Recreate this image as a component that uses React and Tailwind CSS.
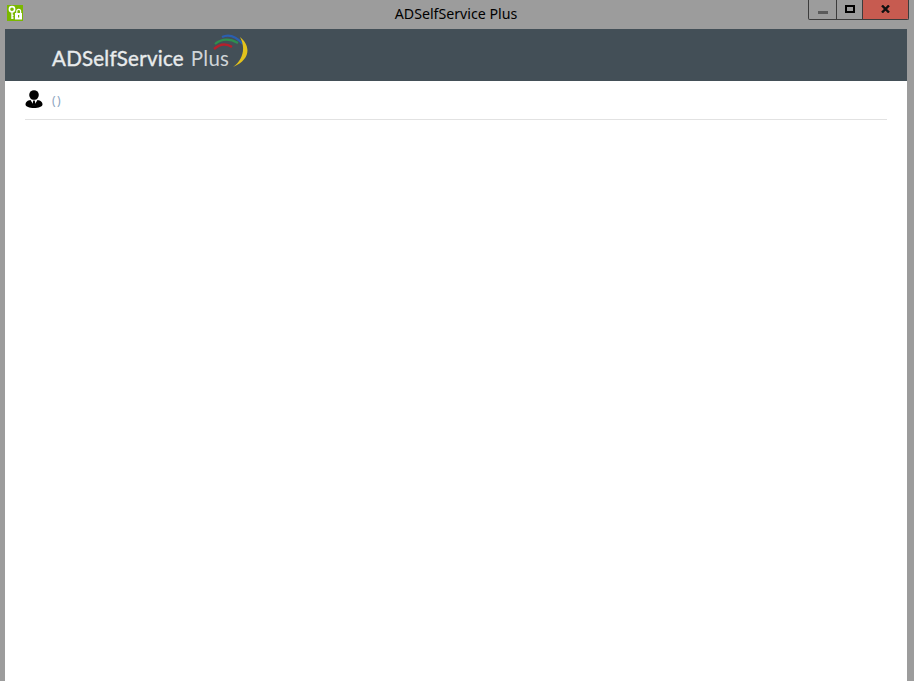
import React from 'react';

const AppIcon = () => (
  <div className="w-[16px] h-[16px] bg-[#7ab800]">
    <svg width="16" height="16" viewBox="0 0 16 16" fill="none">
      <circle cx="5" cy="4.200" r="2.600" stroke="#fff" strokeWidth="1.600" />
      <path d="M5 7v7M5 10.500h1.500M5 13h1.500" stroke="#fff" strokeWidth="1.400" />
      <path d="M9.800 8V6.200a1.900 1.900 0 0 1 3.800 0V8" stroke="#fff" strokeWidth="1.200" />
      <path d="M8 8h7v6.500H8z" fill="#fff" />
      <path d="M11 10h1.200v2.500H11z" fill="#7ab800" />
    </svg>
  </div>
);

const WindowControls = () => (
  <div className="flex h-[20px] mr-[5px] border border-t-0 border-[#3c3c3c] rounded-b-[2px] overflow-hidden">
    <div className="w-[28px] flex items-center justify-center border-r border-[#3c3c3c]">
      <div className="w-[10px] h-[3px] mt-[5px] bg-[#5a5a5a]" />
    </div>
    <div className="w-[26px] flex items-center justify-center border-r border-[#3c3c3c]">
      <div className="w-[10px] h-[8px] border-2 border-black mb-[1px]" />
    </div>
    <div className="w-[45px] flex items-center justify-center bg-[#c75b50]">
      <svg width="9" height="8" viewBox="0 0 9 8" className="mb-[2px]">
        <path d="M1 0.500l7 7M8 0.500l-7 7" stroke="#111" strokeWidth="2.400" />
      </svg>
    </div>
  </div>
);

const Logo = () => (
  <div className="flex items-start ml-[47px] mt-[4px]">
    <span className="mt-[13px] text-[20.5px] leading-[24px] text-[#e8ebec] font-['Lato',sans-serif] [-webkit-text-stroke:0.4px_#e8ebec] tracking-[0.25px] whitespace-nowrap">
      ADSelfService
      <span className="ml-[7px] text-[#cfd4d7] [-webkit-text-stroke:0px]">Plus</span>
    </span>
    <svg width="40" height="36" viewBox="0 0 40 36" className="ml-[-19px] shrink-0" fill="none">
      <path d="M5 11Q15 3 28 10" stroke="#2f8f4e" strokeWidth="2.200" />
      <path d="M12 4Q22 -1 33 11" stroke="#2a5fb0" strokeWidth="2.200" />
      <path d="M4 16Q13 8 22 14" stroke="#b5202c" strokeWidth="2.400" />
      <path d="M30 4C40 12 42 26 23 34C33 27 36 15 30 4Z" fill="#e3c21c" />
    </svg>
  </div>
);

const UserIcon = () => (
  <svg width="18" height="18" viewBox="0 0 18 18" className="mb-[2px]">
    <circle cx="9" cy="5" r="4.800" fill="#000" />
    <path d="M0.500 14.500C0.500 11.500 3.500 10 6.800 9.800H11.200C14.500 10 17.500 11.500 17.500 14.500C17.500 16.800 13.500 18 9 18S0.500 16.800 0.500 14.500Z" fill="#000" />
    <path d="M5.500 10L9 15.500L12.500 10Z" fill="#fff" />
    <path d="M8.200 10.500h1.600l0.500 4-1.300 1.500-1.300-1.500z" fill="#000" />
  </svg>
);

export default function App() {
  return (
    <div className="w-[914px] h-[681px] overflow-hidden bg-[#9c9c9c] flex flex-col font-['Liberation_Sans',sans-serif]">
      <div className="h-[29px] shrink-0 relative flex items-start justify-between pl-[7px]">
        <div className="mt-[5px]"><AppIcon /></div>
        <div className="absolute left-0 right-0 top-[5px] text-center text-[14.2px] leading-[18px] text-black font-['Noto_Sans',sans-serif] pr-[2px]">
          ADSelfService Plus
        </div>
        <WindowControls />
      </div>
      <div className="ml-[5px] mr-[7px] flex-1 flex flex-col bg-white">
        <div className="h-[52px] shrink-0 bg-[#434f57]">
          <Logo />
        </div>
        <div className="mx-[20px] h-[39px] flex items-center border-b border-[#e2e2e2]">
          <UserIcon />
          <span className="ml-[9px] mt-[2px] text-[12px] tracking-[1.5px] text-[#8aa3c0] font-['Noto_Sans',sans-serif]">()</span>
        </div>
      </div>
    </div>
  );
}
